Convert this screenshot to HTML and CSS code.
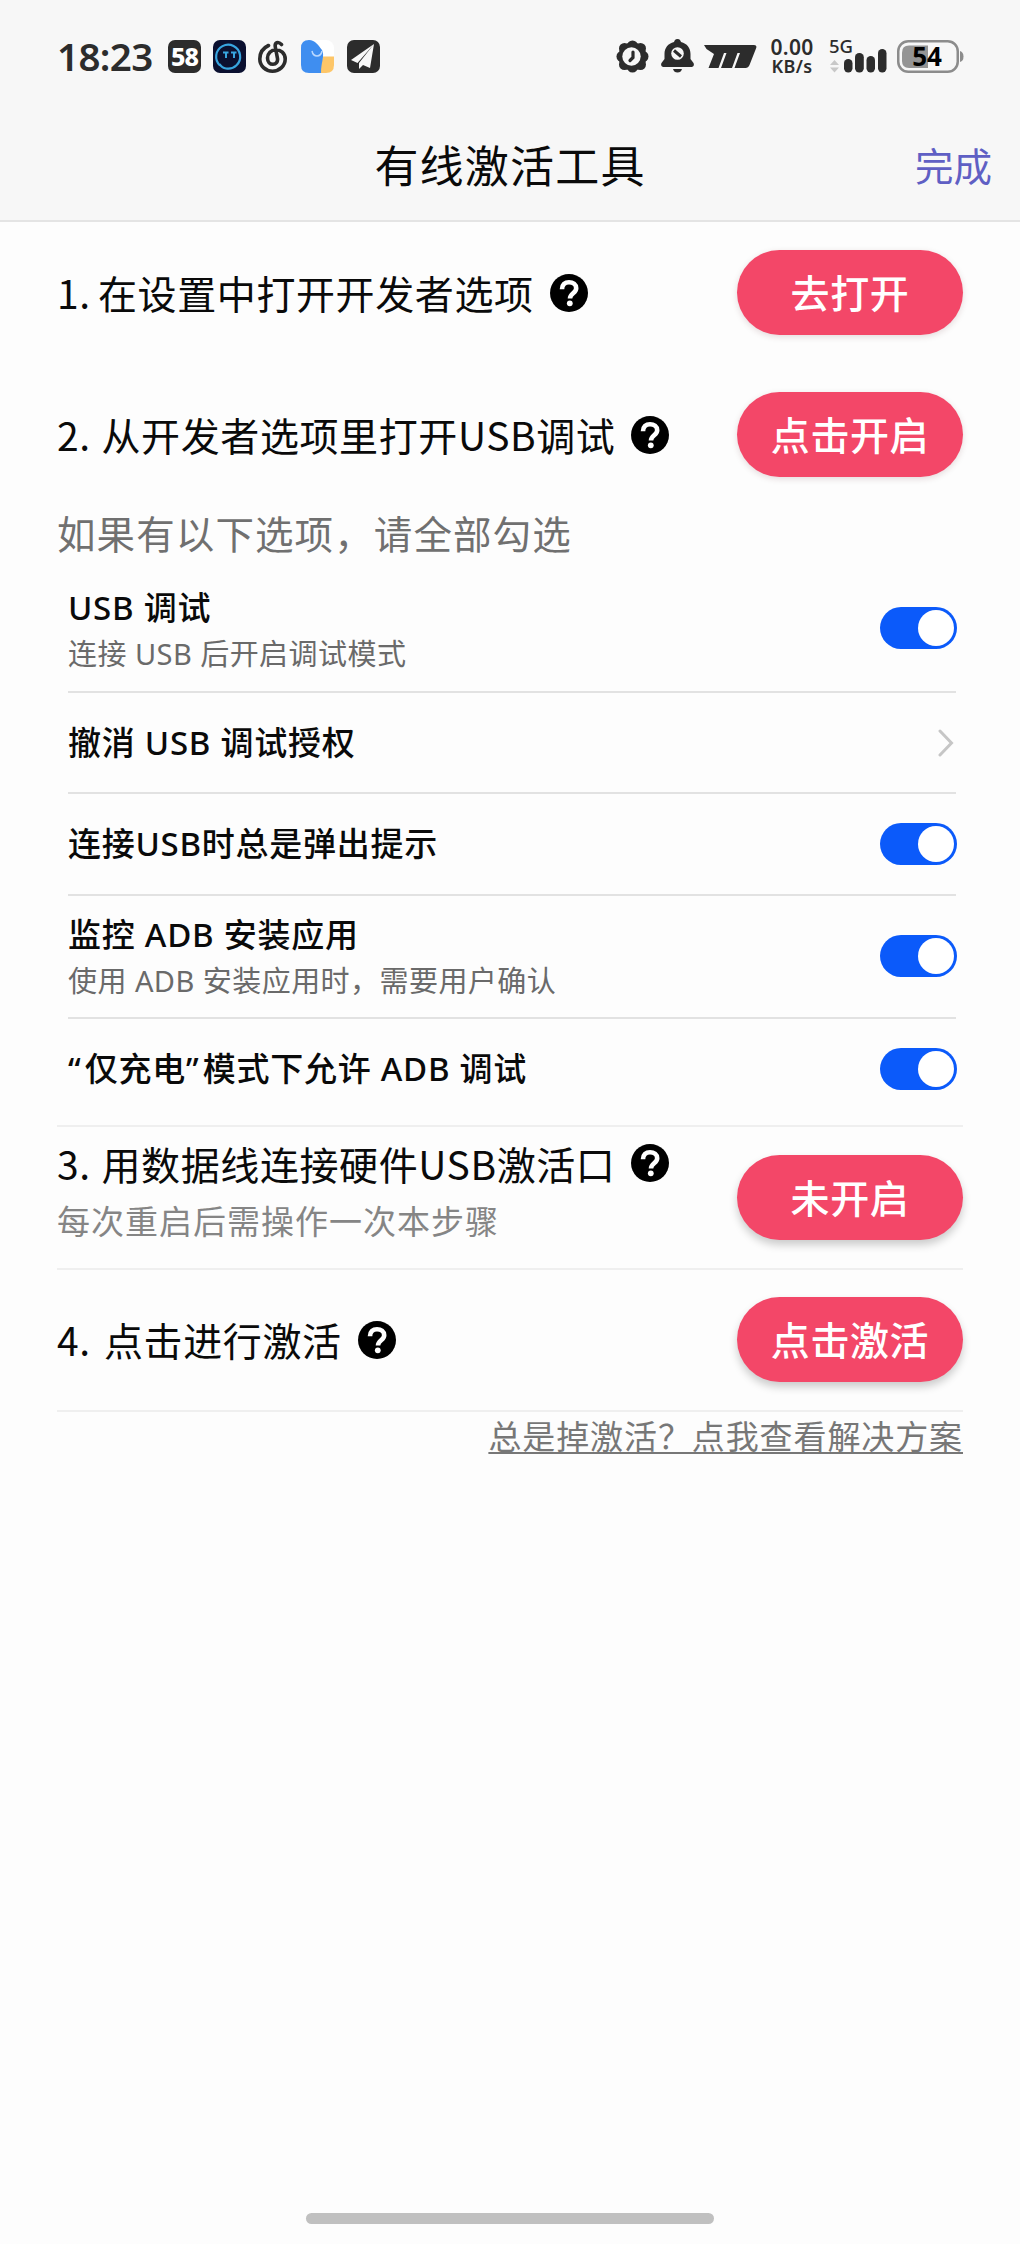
FILE: index.html
```html
<!DOCTYPE html>
<html lang="zh-CN">
<head>
<meta charset="utf-8">
<title>有线激活工具</title>
<link rel="stylesheet" href="styles.css">
</head>
<body>
<svg class="defs" width="0" height="0">
  <symbol id="help" viewBox="0 0 38 38">
    <circle cx="19" cy="19" r="19" fill="#000"/>
    <path d="M12 15.200C12 10.600 15 8.200 19 8.200c4 0 7.200 2.500 7.200 6 0 5-6.200 5.200-6.200 10.300" fill="none" stroke="#fff" stroke-width="4.600"/>
    <circle cx="19.800" cy="29.300" r="2.900" fill="#fff"/>
  </symbol>
</svg>
<div class="screen">
  <header class="top">
    <div class="status">
      <div class="status-left">
        <span class="time">18:23</span>
        <span class="badge58">58</span>
        <svg width="33" height="33" viewBox="0 0 33 33">
          <rect width="33" height="33" rx="7" fill="#0b1030"/>
          <path d="M7 25.500A12 12 0 1 1 13 28.500Q9 28 6.500 24" fill="none" stroke="#38a5e0" stroke-width="2.200"/>
          <path d="M10 12.500h5.500M18 12.500h5.500M13 13v5M21 13v5" stroke="#38a5e0" stroke-width="2" fill="none"/>
        </svg>
        <svg width="31" height="33" viewBox="0 0 31 33">
          <path d="M10.500 5.500C5 8 1.800 13 1.800 19a12.700 12.200 0 0 0 25.400 0C27.200 13 22.500 9.700 18 9.700 13 9.700 9.500 13.500 9.500 18c0 4 2.500 6.300 5.500 6.300s5-2.500 4.500-5.800L17.300 7C16.500 2.500 20 1 23.500 4.500" fill="none" stroke="#2c2c2c" stroke-width="3.600" stroke-linecap="round" stroke-linejoin="round"/>
        </svg>
        <svg width="34" height="33" viewBox="0 0 34 33">
          <rect width="33" height="33" rx="8" fill="#fff"/>
          <path d="M22 16.500H33V25q0 8-8 8H18z" fill="#fdc668"/>
          <path d="M0 8Q0 0 8 0c6 0 10 6 13 10 3 6-1 12-1 23H8q-8 0-8-8z" fill="#3f8ef0"/>
          <path d="M11 11q1 5 5 5t5-5" fill="none" stroke="#b9d8ff" stroke-width="1.500"/>
        </svg>
        <svg width="33" height="33" viewBox="0 0 33 33">
          <rect width="33" height="33" rx="7" fill="#2c2c2c"/>
          <path d="M27 4L4 20l6.500 3zM27 4L12 23v6l4-4 7 3z" fill="#f7f7f7"/>
        </svg>
      </div>
      <div class="status-right">
        <svg width="33" height="33" viewBox="0 0 33 33">
          <g fill="#2c2c2c">
            <circle cx="16.500" cy="16.500" r="14"/>
            <circle cx="16.500" cy="6" r="5.500"/><circle cx="16.500" cy="27" r="5.500"/>
            <circle cx="6" cy="16.500" r="5.500"/><circle cx="27" cy="16.500" r="5.500"/>
            <circle cx="8.500" cy="8.500" r="5.500"/><circle cx="24.500" cy="8.500" r="5.500"/>
            <circle cx="8.500" cy="24.500" r="5.500"/><circle cx="24.500" cy="24.500" r="5.500"/>
          </g>
          <circle cx="15.500" cy="16.500" r="9.200" fill="#f7f7f7"/>
          <path d="M17 12v5.500l-3 3" fill="none" stroke="#2c2c2c" stroke-width="3.200" stroke-linecap="round"/>
        </svg>
        <svg width="33" height="34" viewBox="0 0 33 34">
          <path d="M16.500 0c2.500 0 3 1.500 3.500 3 6 1.500 9.500 6 9.500 12v5l3 4c1 2 0 4-2 4h-28c-2 0-3-2-2-4l3-4v-5c0-6 3.500-10.500 9.500-12 .5-1.500 1-3 3.500-3z" fill="#2c2c2c"/>
          <path d="M12 30h9q-1 3.500-4.500 3.500T12 30z" fill="#2c2c2c"/>
          <circle cx="16.500" cy="14.500" r="6.300" fill="#f7f7f7"/>
          <path d="M13 11.500l7 6" stroke="#2c2c2c" stroke-width="3"/>
        </svg>
        <svg class="brand" width="53" height="23" viewBox="0 0 53 23">
          <path d="M0 0H50q3.500 0 2 3.500L45.500 20q-1.200 3-4 3H30.500L36 8H33.500L28 23H17L22.500 8H20L14.500 23H4.500L10 9 2.500 4z" fill="#2c2c2c"/>
        </svg>
        <div class="speed"><span>0.00</span><span class="unit">KB/s</span></div>
        <svg class="signal" width="58" height="34" viewBox="0 0 58 34">
          <text x="0" y="14" class="net">5G</text>
          <path d="M1 26l4.500-5 4.500 5zM1 28.500h9l-4.500 5z" fill="#c8c8c8"/>
          <g fill="#2c2c2c"><rect x="15" y="20" width="8.500" height="13.500" rx="4.200"/><rect x="26" y="14" width="8.800" height="19.500" rx="4.200"/><rect x="37.500" y="17" width="8.500" height="16.500" rx="4.200"/><rect x="49" y="10" width="8.500" height="23.500" rx="4.200"/></g>
        </svg>
        <svg class="battery" width="67" height="33" viewBox="0 0 67 33">
          <rect x="1.250" y="1.250" width="59.500" height="30.500" rx="10" fill="none" stroke="#8c8c8c" stroke-width="2.500"/>
          <path d="M12 5.500h19v22.500H12q-7 0-7-7v-8.500q0-7 7-7z" fill="#949494"/>
          <path d="M63 11q3.500 1 3.500 5.500T63 22z" fill="#8c8c8c"/>
          <text x="30" y="25.500" text-anchor="middle" class="pct">54</text>
        </svg>
      </div>
    </div>
    <div class="nav">
      <span></span>
      <h1>有线激活工具</h1>
      <a class="done">完成</a>
    </div>
  </header>

  <main>
    <section class="step">
      <div class="label"><span class="num n1">1.</span>在设置中打开开发者选项<svg class="help"><use href="#help"/></svg></div>
      <button>去打开</button>
    </section>
    <section class="step">
      <div class="label"><span class="num">2.</span>从开发者选项里打开USB调试<svg class="help"><use href="#help"/></svg></div>
      <button>点击开启</button>
    </section>
    <p class="note">如果有以下选项，请全部勾选</p>
    <ul class="options">
      <li class="row r1"><div><p class="name">USB 调试</p><p class="desc">连接 USB 后开启调试模式</p></div><i class="toggle"></i></li>
      <li class="row r2"><p class="name">撤消 USB 调试授权</p><svg class="chevron" width="16" height="28" viewBox="0 0 16 28"><path d="M2 2l11.500 12L2 26" fill="none" stroke="#c6c6c6" stroke-width="3" stroke-linecap="round"/></svg></li>
      <li class="row r3"><p class="name">连接USB时总是弹出提示</p><i class="toggle"></i></li>
      <li class="row r4"><div><p class="name">监控 ADB 安装应用</p><p class="desc">使用 ADB 安装应用时，需要用户确认</p></div><i class="toggle"></i></li>
      <li class="row r5"><p class="name"><span class="quote">“</span>仅充电<span class="quote">”</span>模式下允许 ADB 调试</p><i class="toggle"></i></li>
    </ul>
    <section class="step lined third">
      <div><div class="label"><span class="num">3.</span>用数据线连接硬件USB激活口<svg class="help"><use href="#help"/></svg></div>
      <p class="hint">每次重启后需操作一次本步骤</p></div>
      <button class="raised">未开启</button>
    </section>
    <section class="step lined">
      <div class="label"><span class="num n4">4.</span>点击进行激活<svg class="help"><use href="#help"/></svg></div>
      <button class="raised">点击激活</button>
    </section>
    <div class="footer"><a class="link">总是掉激活？点我查看解决方案</a></div>
  </main>
  <div class="home"></div>
</div>
</body>
</html>
```
FILE: styles.css
```css
* { box-sizing: border-box; margin: 0; padding: 0; }
body { background: #fdfdfd; font-family: "Noto Sans CJK SC", "Noto Sans", sans-serif; color: #0a0a0a; }
.defs { position: absolute; }
.screen { width: 1020px; height: 2244px; display: flex; flex-direction: column; }
svg { flex: none; display: block; }

.top { height: 222px; background: #f7f7f7; border-bottom: 2px solid #e4e4e4; }
.status { height: 112px; padding: 0 57px; display: flex; justify-content: space-between; align-items: center; color: #2c2c2c; font-family: "Noto Sans", sans-serif; }
.status-left { display: flex; align-items: center; gap: 12px; }
.time { width: 99px; font-size: 38.500px; font-weight: 600; line-height: 40px; letter-spacing: -0.6px; white-space: nowrap; }
.badge58 { width: 33px; height: 33px; border-radius: 7px; background: #2c2c2c; color: #fff; font: 800 25px/33px "Noto Sans", sans-serif; text-align: center; letter-spacing: -1px; }
.status-right { display: flex; align-items: center; gap: 12px; }
.brand { margin-left: -2px; }
.speed { display: flex; flex-direction: column; width: 46px; font-size: 21px; line-height: 19px; font-weight: 600; text-align: center; white-space: nowrap; letter-spacing: 0.3px; }
.unit { font-size: 18px; line-height: 18px; }
.signal { margin-left: 2px; overflow: visible; }
.net { font: 500 18.500px "Noto Sans", sans-serif; fill: #2c2c2c; }
.pct { font: 700 26px "Noto Sans", sans-serif; fill: #000; }
.battery { margin-left: -2px; margin-right: -1px; }

.nav { display: grid; grid-template-columns: 1fr auto 1fr; align-items: center; height: 104px; padding: 0 28px; }
h1 { font-size: 44px; line-height: 60px; font-weight: 400; letter-spacing: 1.2px; }
.done { justify-self: end; font-size: 38.500px; line-height: 60px; color: #5f5fc4; }

main { padding: 0 57px; flex: 1; }
.step { height: 142px; padding-bottom: 1px; display: flex; justify-content: space-between; align-items: center; }
.step.lined { height: 142.500px; padding-bottom: 0; border-bottom: 2px solid #efefef; }
.label { display: flex; align-items: center; font-size: 39px; line-height: 50px; height: 52px; letter-spacing: 0.6px; white-space: nowrap; margin-top: -1px; }
.num { width: 44.500px; }
.n1 { width: 41px; }
.n4 { width: 47px; }
.help { width: 38px; height: 38px; margin: 1px 0 0 16px; }
.third .label { margin-top: -13px; }
button { width: 226px; height: 85px; border: 0; border-radius: 43px; background: #f34768; color: #fff; font: 500 39px/80px "Noto Sans CJK SC", sans-serif; letter-spacing: 0.6px; box-shadow: 0 2px 6px rgba(80, 20, 30, .15); padding-bottom: 3px; }
button.raised { box-shadow: 0 5px 8px rgba(0, 0, 0, .2); }
.note { height: 58px; font-size: 38.500px; line-height: 52px; letter-spacing: 1.1px; color: #707070; }

.options { list-style: none; height: 563px; border-bottom: 2px solid #efefef; padding: 0 7px 0 11px; font-family: "Noto Sans", "Noto Sans CJK SC", sans-serif; }
.row { display: flex; align-items: center; justify-content: space-between; border-bottom: 2px solid #e2e2e2; }
.r1 { height: 129px; }
.r1 > div { padding-top: 7px; }
.r2 { height: 101px; }
.r3 { height: 101.500px; }
.r4 { height: 123.500px; }
.r4 > div { padding-top: 4px; }
.r5 { height: 100px; border: 0; }
.name { font-size: 33px; line-height: 46px; font-weight: 500; letter-spacing: 0.75px; }
.quote { letter-spacing: 4px; }
.desc { font-size: 29px; line-height: 46px; color: #6a6a6a; letter-spacing: 0.45px; }
.chevron { margin-right: 2px; }
.toggle { width: 77px; height: 42px; margin-right: -1px; border-radius: 21px; background: #0b5afa; padding: 3px; display: flex; justify-content: flex-end; }
.toggle::before { content: ""; width: 36px; height: 36px; border-radius: 50%; background: #fff; }

.hint { font-size: 33px; line-height: 50px; letter-spacing: 1px; color: #858585; margin-top: 6px; }
.footer { display: flex; justify-content: flex-end; }
.link { font-size: 33px; line-height: 46px; letter-spacing: 0.9px; color: #777; text-decoration: underline; text-underline-offset: 3px; text-decoration-thickness: 2px; text-decoration-skip-ink: none; }
.home { width: 408px; height: 11px; margin: 0 auto 20px; border-radius: 6px; background: #c0c0c0; }
```
